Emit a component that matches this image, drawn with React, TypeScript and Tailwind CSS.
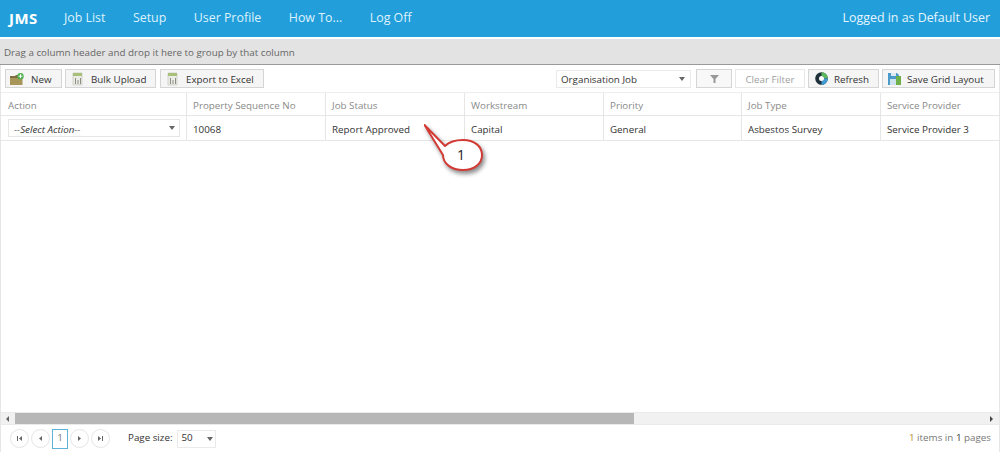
const NAV = ["Job List", "Setup", "User Profile", "How To...", "Log Off"]

const COLUMNS = [
  { title: "Action", width: "w-[186px]" },
  { title: "Property Sequence No", width: "w-[139px]" },
  { title: "Job Status", width: "w-[139px]" },
  { title: "Workstream", width: "w-[139px]" },
  { title: "Priority", width: "w-[138px]" },
  { title: "Job Type", width: "w-[139px]" },
  { title: "Service Provider", width: "flex-1" },
]

const CELLS = ["10068", "Report Approved", "Capital", "General", "Asbestos Survey", "Service Provider 3"]

function Caret() {
  return <span className="h-0 w-0 border-x-[3.5px] border-t-[4px] border-x-transparent border-t-[#666]" />
}

function NewIcon() {
  return (
    <svg width="14" height="12" viewBox="0 0 14 12">
      <path d="M0 3h5l1-1h6v10H0z" fill="#7d6f3f" />
      <path d="M0 5h12.500v7H0z" fill="#a8955a" />
      <circle cx="10.500" cy="3.200" r="3.200" fill="#4caf50" />
      <path d="M10.500 1.200v4M8.500 3.200h4" stroke="#fff" strokeWidth="1" />
    </svg>
  )
}

function SheetIcon() {
  return (
    <svg width="11" height="14" viewBox="0 0 11 14">
      <path d="M1 1h9v12H1z" fill="#ecece6" stroke="#c5c5bd" strokeWidth="0.7" />
      <path d="M1 1h9v3H1z" fill="#a9c07a" />
      <path d="M3 6h1v6H3zM5.500 8h1v4h-1zM8 6h1v6H8z" fill="#8d8d85" />
    </svg>
  )
}

function RefreshIcon() {
  return (
    <svg width="13" height="13" viewBox="0 0 13 13">
      <circle cx="6.500" cy="6.500" r="6.300" fill="#1d2f3a" />
      <path d="M6.500.2a6.300 6.300 0 0 1 6.300 6.300H9a2.500 2.500 0 0 0-2.500-2.500z" fill="#5cb85c" />
      <path d="M12.800 6.500a6.300 6.300 0 0 1-6.300 6.300V9A2.500 2.500 0 0 0 9 6.500z" fill="#3f9bd5" />
      <circle cx="6.500" cy="6.500" r="2.500" fill="#fff" />
    </svg>
  )
}

function SaveIcon() {
  return (
    <svg width="13" height="13" viewBox="0 0 13 13">
      <path d="M0 1h9l2 2v10H0z" fill="#4a9bc9" />
      <path d="M3 1h5v3H3z" fill="#dfeaf0" />
      <path d="M2 7h7v6H2z" fill="#cfe3ee" />
      <path d="M8 4h5v9H8z" fill="#6fb04a" />
    </svg>
  )
}

function ToolButton({ icon, label, className }: { icon?: React.ReactNode; label?: string; className: string }) {
  return (
    <div className={`flex h-[19px] items-center border border-[#d5d5d5] bg-[#f5f5f5] text-[#333] ${className}`}>
      {icon && <span className="flex">{icon}</span>}
      {label && <span className="pt-[3px]">{label}</span>}
    </div>
  )
}

function PagerButton({ children }: { children: React.ReactNode }) {
  return (
    <div className="flex h-[19px] w-[19px] items-center justify-center rounded-full border border-[#e5e5e5] bg-white text-[#666]">
      {children}
    </div>
  )
}

export default function App() {
  return (
    <div className="relative flex h-[452px] w-[1000px] flex-col overflow-hidden bg-white text-[9.8px] text-[#333] [font-family:'Open_Sans',sans-serif]">
      <header className="flex h-[37px] shrink-0 items-center justify-between bg-[#229fdb] pb-[1px] pl-[9px] pr-[10px] text-white">
        <div className="flex items-center">
          <span className="mr-[26px] text-[15px] font-bold tracking-[0.5px]">JMS</span>
          <nav className="flex gap-[27.500px] text-[12.400px] text-[#dff1fb]">
            {NAV.map((n) => (
              <span key={n}>{n}</span>
            ))}
          </nav>
        </div>
        <span className="text-[12.400px] text-[#e6f5fd]">Logged in as Default User</span>
      </header>

      <div className="mt-[2px] flex h-[26px] shrink-0 items-center border-b border-[#9a9a9a] bg-[#e3e3e3] pl-[4px] pt-[4px] text-[#666]">
        Drag a column header and drop it here to group by that column
      </div>

      <div className="flex min-h-0 flex-1 flex-col border-x border-[#e6e6e6]">
        <div className="flex h-[28px] shrink-0 items-center justify-between border-b border-[#eee] pl-[4px] pr-[4px]">
          <div className="flex gap-[3px]">
            <ToolButton icon={<NewIcon />} label="New" className="w-[57px] gap-[7px] pl-[4px]" />
            <ToolButton icon={<SheetIcon />} label="Bulk Upload" className="w-[91px] gap-[8px] pl-[6px]" />
            <ToolButton icon={<SheetIcon />} label="Export to Excel" className="ml-[1px] w-[104px] gap-[8px] pl-[6px]" />
          </div>
          <div className="flex items-center gap-[3px]">
            <div className="mr-[2px] flex h-[18px] w-[135px] items-center justify-between border border-[#eaeaea] pl-[4px] pr-[5px]">
              <span className="pt-[3px]">Organisation Job</span>
              <Caret />
            </div>
            <ToolButton
              icon={
                <svg width="9" height="8" viewBox="0 0 9 8">
                  <path d="M0 0h9L5.500 4v4h-2V4z" fill="#999" />
                </svg>
              }
              className="w-[36px] justify-center bg-[#f8f8f8]"
            />
            <div className="flex h-[19px] w-[70px] items-center justify-center border border-[#e8e8e8] bg-white pt-[3px] text-[#a0a0a0]">
              Clear Filter
            </div>
            <ToolButton icon={<RefreshIcon />} label="Refresh" className="w-[71px] gap-[6px] pl-[6px]" />
            <ToolButton icon={<SaveIcon />} label="Save Grid Layout" className="w-[113px] gap-[6px] pl-[5px]" />
          </div>
        </div>

        <div className="flex h-[23px] shrink-0 border-b border-[#e6e6e6] text-[#8a8a8a]">
          {COLUMNS.map((c, i) => (
            <div key={c.title} className={`flex items-center pt-[4px] ${i > 0 ? "border-l border-[#e6e6e6] pl-[6px]" : "pl-[7px]"} ${i === 0 ? "w-[185px]" : c.width}`}>
              {c.title}
            </div>
          ))}
        </div>

        <div className="flex h-[25px] shrink-0 border-b border-[#e6e6e6]">
          <div className="flex w-[185px] items-center pl-[7px] pr-[6px]">
            <div className="flex h-[18px] w-full items-center justify-between border border-[#e6e6e6] pl-[5px] pr-[4px] italic">
              <span className="pt-[4px]">--Select Action--</span>
              <Caret />
            </div>
          </div>
          {CELLS.map((c, i) => (
            <div key={c} className={`flex items-center border-l border-[#e6e6e6] pl-[6px] pt-[4px] ${COLUMNS[i + 1].width}`}>
              {c}
            </div>
          ))}
        </div>

        <div className="flex-1" />

        <div className="flex h-[13px] shrink-0 items-center border-y border-[#eaeaea] bg-[#f1f1f1]">
          <span className="ml-[5px] mr-[6px] h-0 w-0 border-y-[3px] border-r-[3px] border-y-transparent border-r-[#666]" />
          <div className="h-full w-[619px] bg-[#b7b7b7]" />
          <span className="ml-auto mr-[6px] h-0 w-0 border-y-[3px] border-l-[3px] border-y-transparent border-l-[#444]" />
        </div>

        <div className="flex h-[27px] shrink-0 items-center justify-between pl-[9px] pr-[8px]">
          <div className="flex items-center">
            <div className="flex items-center gap-[2px] text-[#666]">
              <PagerButton>
                <svg width="7" height="7" viewBox="0 0 7 7"><path d="M1 1h1v5H1zM6 1v5L3 3.500z" fill="#666" /></svg>
              </PagerButton>
              <PagerButton>
                <svg width="7" height="7" viewBox="0 0 7 7"><path d="M5 1v5L2 3.500z" fill="#666" /></svg>
              </PagerButton>
              <div className="flex h-[20px] w-[16px] items-center justify-center border border-[#5fb3d9] text-[#777]">1</div>
              <PagerButton>
                <svg width="7" height="7" viewBox="0 0 7 7"><path d="M2 1v5l3-2.500z" fill="#666" /></svg>
              </PagerButton>
              <PagerButton>
                <svg width="7" height="7" viewBox="0 0 7 7"><path d="M1 1v5l3-2.500zM5 1h1v5H5z" fill="#666" /></svg>
              </PagerButton>
            </div>
            <span className="ml-[18px] mr-[4px]">Page size:</span>
            <div className="flex h-[18px] w-[39px] items-center justify-between border border-[#eaeaea] pl-[4px] pr-[2px]">
              50
              <Caret />
            </div>
          </div>
          <span className="text-[#777]">
            <span className="text-[#b58a2c]">1</span> items in <span className="text-[#333]">1</span> pages
          </span>
        </div>
      </div>

      <div className="absolute left-[424px] top-[124px] h-[58px] w-[66px]">
        <svg width="66" height="58" viewBox="0 0 66 58" className="drop-shadow-[2px_3px_2px_rgba(0,0,0,0.45)]">
          <path
            d="M0.500 1 L21 22 C25 18 31 16 39 16 C50 16 58 22 58 31 C58 40 50 46 39 46 C28 46 19 40 19 31 Z"
            fill="#fff"
            stroke="#d23b35"
            strokeWidth="2"
            strokeLinejoin="round"
          />
        </svg>
        <span className="absolute left-[33px] top-[20px] text-[14px] text-[#222]">1</span>
      </div>
    </div>
  )
}
